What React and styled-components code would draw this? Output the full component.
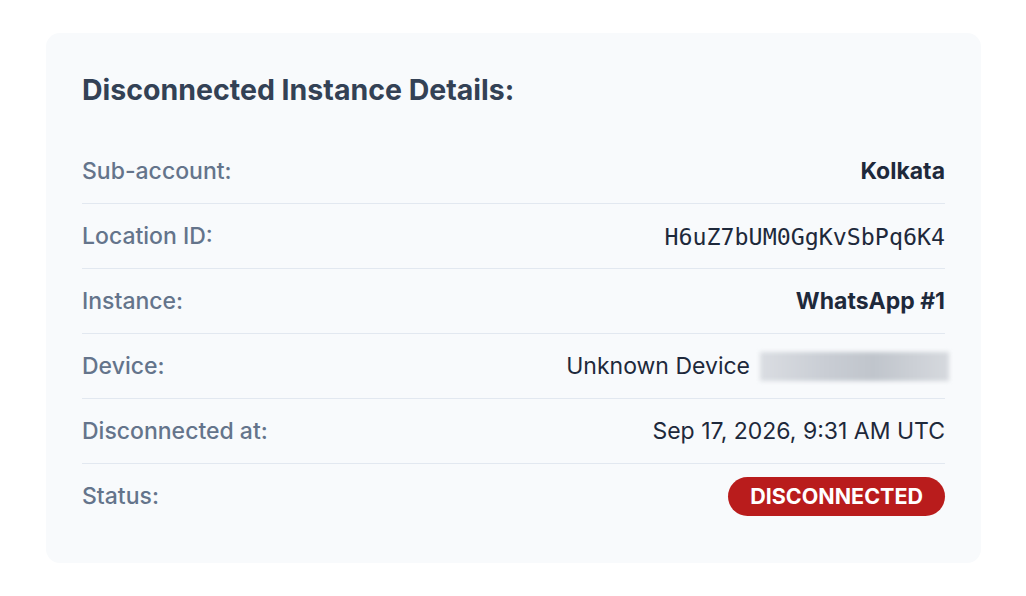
import React from 'react';
import styled, { createGlobalStyle } from 'styled-components';

const GlobalStyle = createGlobalStyle`
  body {
    margin: 0;
    background: #ffffff;
    font-family: Inter, "Noto Sans", sans-serif;
  }
`;

const details = [
  { label: 'Sub-account:', value: 'Kolkata', kind: 'strong' },
  { label: 'Location ID:', value: 'H6uZ7bUM0GgKvSbPq6K4', kind: 'mono' },
  { label: 'Instance:', value: 'WhatsApp #1', kind: 'strong' },
  { label: 'Device:', value: 'Unknown Device', kind: 'device' },
  { label: 'Disconnected at:', value: 'Sep 17, 2026, 9:31 AM UTC', kind: 'plain' },
  { label: 'Status:', value: 'DISCONNECTED', kind: 'badge' }
];

const App = () => {
  const renderValue = item => {
    if (item.kind === 'badge') return <Badge>{item.value}</Badge>;
    if (item.kind === 'device') {
      return (
        <Value>
          {item.value}
          <Redacted aria-hidden="true" />
        </Value>
      );
    }
    return <Value kind={item.kind}>{item.value}</Value>;
  };

  return (
    <Page>
      <GlobalStyle />
      <Card>
        <Title>Disconnected Instance Details:</Title>
        <List>
          {details.map(item => (
            <Row key={item.label}>
              <Label>{item.label}</Label>
              {renderValue(item)}
            </Row>
          ))}
        </List>
      </Card>
    </Page>
  );
};

export default App;

const Page = styled.div`
  padding: 33px 45px 34px 46px;
`;

const Card = styled.section`
  background: #f8fafc;
  border-radius: 14px;
  padding: 37px 36px 35px 36px;
`;

const Title = styled.h2`
  margin: 0 0 29px 0;
  font-size: 28.5px;
  line-height: 40px;
  font-weight: 700;
  color: #334155;
`;

const List = styled.div`
  display: flex;
  flex-direction: column;
`;

const Row = styled.div`
  display: flex;
  align-items: center;
  justify-content: space-between;
  height: 64px;
  border-bottom: 1px solid #e2e8f0;
  &:last-child {
    border-bottom: none;
  }
`;

const Label = styled.span`
  font-size: 23px;
  color: #64748b;
  font-weight: 500;
`;

const Value = styled.span`
  display: flex;
  align-items: center;
  gap: 10px;
  font-size: ${p => (p.kind === 'mono' ? '23.3px' : '23px')};
  font-family: ${p => (p.kind === 'mono' ? '"DejaVu Sans Mono", monospace' : 'inherit')};
  font-weight: ${p => (p.kind === 'strong' ? 700 : 400)};
  color: #1e293b;
`;

const Redacted = styled.span`
  display: inline-block;
  width: 189px;
  height: 29px;
  margin-right: -4px;
  background: linear-gradient(90deg, #dadde2 0%, #c9cdd4 35%, #c0c5cc 60%, #d6d9de 100%);
  filter: blur(2px);
`;

const Badge = styled.span`
  display: inline-flex;
  align-items: center;
  justify-content: center;
  height: 39px;
  padding: 0 22px;
  border-radius: 20px;
  background: #b91c1c;
  color: #ffffff;
  font-size: 21.5px;
  font-weight: 700;
`;
